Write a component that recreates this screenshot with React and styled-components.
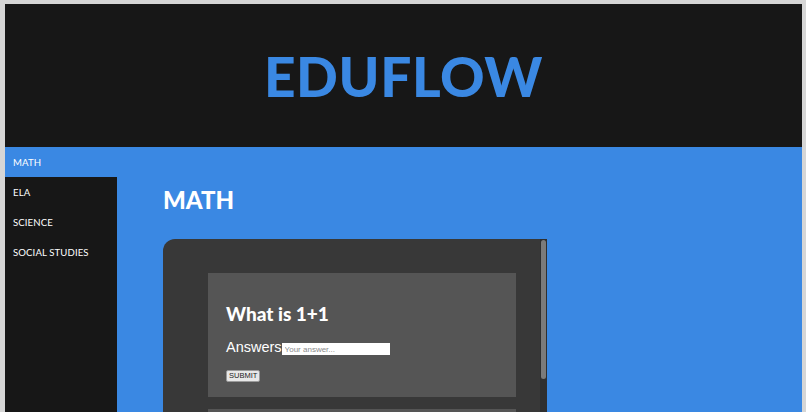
import React from "react";
import styled, { createGlobalStyle } from "styled-components";

const GlobalStyle = createGlobalStyle`
  html, body {
    margin: 0;
    padding: 0;
    background: #d6d6d6;
  }
  body {
    padding: 4px 4px 0 5px;
    font-family: "Lato", "Open Sans", sans-serif;
    overflow: hidden;
  }
`;

const Page = styled.div`
  display: flex;
  flex-direction: column;
  height: 408px;
  background: #3a88e3;
`;

const Header = styled.header`
  height: 143px;
  background: #171717;
  display: flex;
  align-items: center;
  justify-content: center;
`;

const Logo = styled.h1`
  margin: 0;
  color: #3a88e3;
  font-family: "Lato", sans-serif;
  font-weight: 900;
  font-size: 55px;
  letter-spacing: 0.6px;
`;

const Body = styled.div`
  flex: 1;
  display: flex;
  min-height: 0;
`;

const Sidebar = styled.nav`
  width: 112px;
  display: flex;
  flex-direction: column;
`;

const NavItem = styled.div`
  height: 30px;
  display: flex;
  align-items: center;
  padding-left: 8px;
  color: #ffffff;
  font-size: 9.6px;
  letter-spacing: 0.1px;
  background: ${({ $active }) => ($active ? "#3a88e3" : "#171717")};
`;

const NavFill = styled.div`
  flex: 1;
  background: #171717;
`;

const Main = styled.main`
  flex: 1;
  padding: 38px 0 0 46px;
  display: flex;
  flex-direction: column;
  min-height: 0;
`;

const Title = styled.h2`
  margin: 0 0 24px;
  color: #ffffff;
  font-size: 24px;
  font-weight: 900;
  line-height: 30px;
`;

const CardFrame = styled.div`
  position: relative;
  width: 384px;
  flex: 1;
  min-height: 0;
  background: #383838;
  border-top-left-radius: 12px;
  overflow: hidden;
`;

const CardScroll = styled.div`
  height: 100%;
  overflow-y: auto;
  box-sizing: border-box;
  padding: 34px 31px 0 45px;
  display: flex;
  flex-direction: column;
  gap: 12px;
  scrollbar-width: none;
  &::-webkit-scrollbar {
    display: none;
  }
`;

const ScrollTrack = styled.div`
  position: absolute;
  top: 0;
  right: 0;
  bottom: 0;
  width: 7px;
  background: #2f2f2f;
`;

const ScrollThumb = styled.div`
  position: absolute;
  top: 1px;
  left: 1px;
  width: 5px;
  height: 139px;
  border-radius: 3px;
  background: #7b7b7b;
`;

const Question = styled.div`
  flex-shrink: 0;
  height: 124px;
  background: #555555;
  box-sizing: border-box;
  padding: 29px 18px 0;
`;

const QTitle = styled.h3`
  margin: 0 0 12px;
  color: #ffffff;
  font-size: 19px;
  font-weight: 900;
  line-height: 24px;
`;

const AnswerRow = styled.div`
  display: flex;
  align-items: center;
  margin-bottom: 6px;
`;

const AnswerLabel = styled.span`
  color: #ffffff;
  font-family: "Liberation Sans", Arial, sans-serif;
  font-size: 14.5px;
  line-height: 18px;
`;

const AnswerInput = styled.input`
  width: 108px;
  height: 12px;
  box-sizing: border-box;
  border: none;
  padding: 0 3px;
  margin-top: 4px;
  font-family: "Liberation Sans", Arial, sans-serif;
  font-size: 8px;
  background: #ffffff;
  &::placeholder {
    color: #8a8a8a;
  }
`;

const SubmitButton = styled.button`
  height: 12px;
  padding: 0 2px;
  border: 1px solid #9a9a9a;
  border-radius: 2px;
  background: #e8e8e8;
  color: #222;
  font-family: "Liberation Sans", Arial, sans-serif;
  font-size: 7.5px;
  line-height: 10px;
`;

const subjects = ["MATH", "ELA", "SCIENCE", "SOCIAL STUDIES"];
const questions = ["What is 1+1", "What is 2+2"];

export default function App() {
  return (
    <>
      <GlobalStyle />
      <Page>
        <Header>
          <Logo>EDUFLOW</Logo>
        </Header>
        <Body>
          <Sidebar>
            {subjects.map((s, i) => (
              <NavItem key={s} $active={i === 0}>
                {s}
              </NavItem>
            ))}
            <NavFill />
          </Sidebar>
          <Main>
            <Title>MATH</Title>
            <CardFrame>
              <CardScroll>
                {questions.map((q) => (
                  <Question key={q}>
                    <QTitle>{q}</QTitle>
                    <AnswerRow>
                      <AnswerLabel>Answers</AnswerLabel>
                      <AnswerInput placeholder="Your answer..." />
                    </AnswerRow>
                    <SubmitButton>SUBMIT</SubmitButton>
                  </Question>
                ))}
              </CardScroll>
              <ScrollTrack>
                <ScrollThumb />
              </ScrollTrack>
            </CardFrame>
          </Main>
        </Body>
      </Page>
    </>
  );
}
